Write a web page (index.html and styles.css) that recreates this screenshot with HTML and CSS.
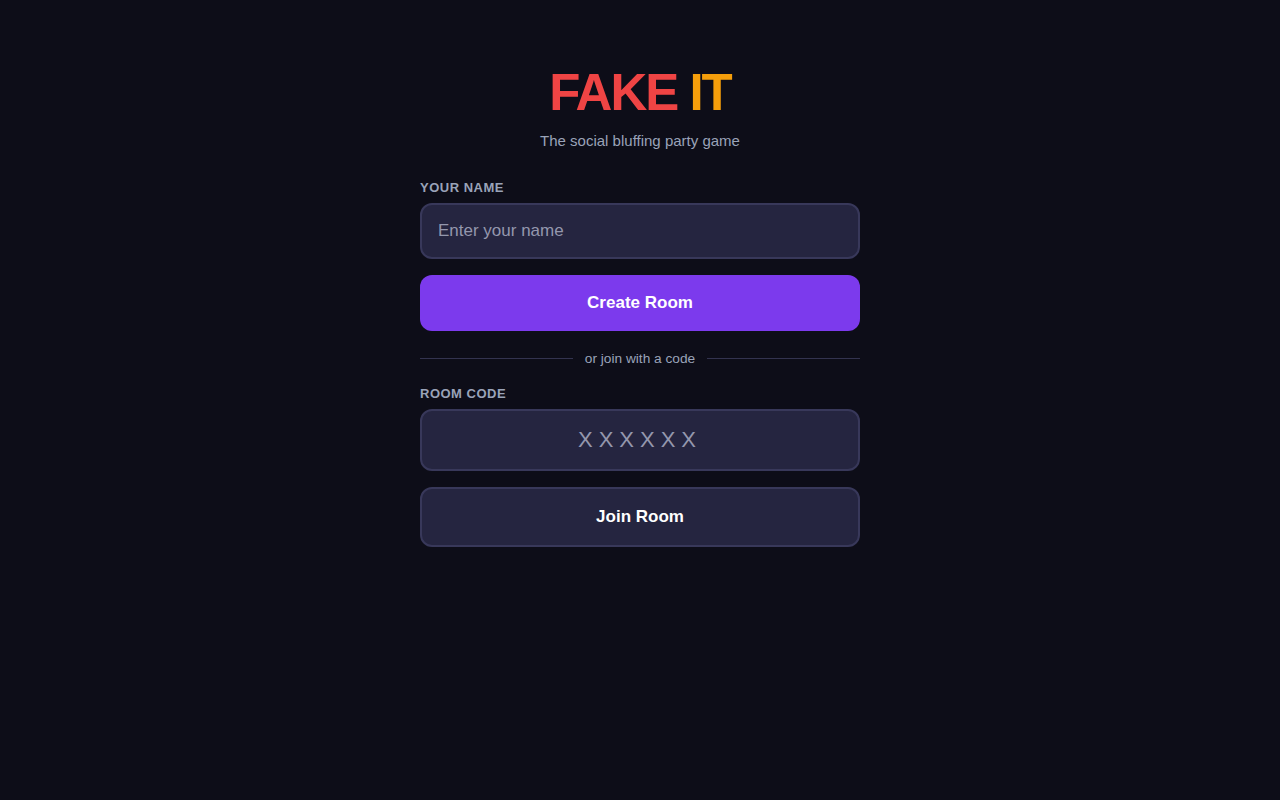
FILE: index.html
```html
<!DOCTYPE html>
<html>
<head>
    <meta charset="UTF-8">
    <title>Fake It</title>
    <link rel="stylesheet" href="styles.css">
</head>
<body>
    <div class="container">
        <h1 class="logo"><span class="fake">FAKE</span> <span class="it">IT</span></h1>
        <p class="tagline">The social bluffing party game</p>

        <!-- Create -->
        <label class="label" for="nameInput">Your Name</label>
        <input type="text" id="nameInput" class="field" placeholder="Enter your name">
        <button class="btn btn-primary">Create Room</button>

        <div class="divider"><span>or join with a code</span></div>

        <!-- Join -->
        <label class="label" for="codeInput">Room Code</label>
        <input type="text" id="codeInput" class="field code" placeholder="XXXXXX" maxlength="6">
        <button class="btn btn-secondary">Join Room</button>
    </div>
</body>
</html>
```

FILE: styles.css
```css
body {
    margin: 0;
    background-color: #0d0d18;
    color: #e5e7eb;
    font-family: "Liberation Sans", Arial, sans-serif;
}
.container {
    width: 440px;
    margin: 0 auto;
    padding-top: 64px;
    display: flex;
    flex-direction: column;
}
.logo {
    margin: 0;
    text-align: center;
    font-size: 51px;
    line-height: 58px;
    font-weight: bold;
    letter-spacing: -2px;
}
.fake {
    color: #ef4444;
}
.it {
    color: #f59e0b;
}
.tagline {
    margin: 10px 0 31px;
    text-align: center;
    font-size: 15px;
    color: #9aa3b8;
}
.label {
    font-size: 13px;
    font-weight: bold;
    text-transform: uppercase;
    letter-spacing: 0.5px;
    color: #9aa3b8;
    margin-bottom: 8px;
}
.field {
    box-sizing: border-box;
    width: 100%;
    height: 56px;
    padding: 0 16px;
    border: 2px solid #38385a;
    border-radius: 12px;
    background-color: #252540;
    color: #e5e7eb;
    font-family: inherit;
    font-size: 17px;
    outline: none;
}
.field::placeholder {
    color: #9497ad;
}
.field.code {
    height: 62px;
    text-align: center;
    font-size: 22px;
    letter-spacing: 6px;
    text-transform: uppercase;
}
.btn {
    box-sizing: border-box;
    width: 100%;
    margin-top: 16px;
    border-radius: 12px;
    font-family: inherit;
    font-size: 17px;
    font-weight: bold;
    color: #ffffff;
    cursor: pointer;
}
.btn-primary {
    height: 56px;
    border: none;
    background-color: #7c3aed;
}
.btn-secondary {
    height: 60px;
    border: 2px solid #38385a;
    background-color: #252540;
}
.divider {
    display: flex;
    align-items: center;
    gap: 12px;
    margin: 20px 0 20px;
    font-size: 13.7px;
    color: #9aa3b8;
}
.divider::before,
.divider::after {
    content: "";
    flex: 1;
    height: 1px;
    background-color: #33334f;
}
```
